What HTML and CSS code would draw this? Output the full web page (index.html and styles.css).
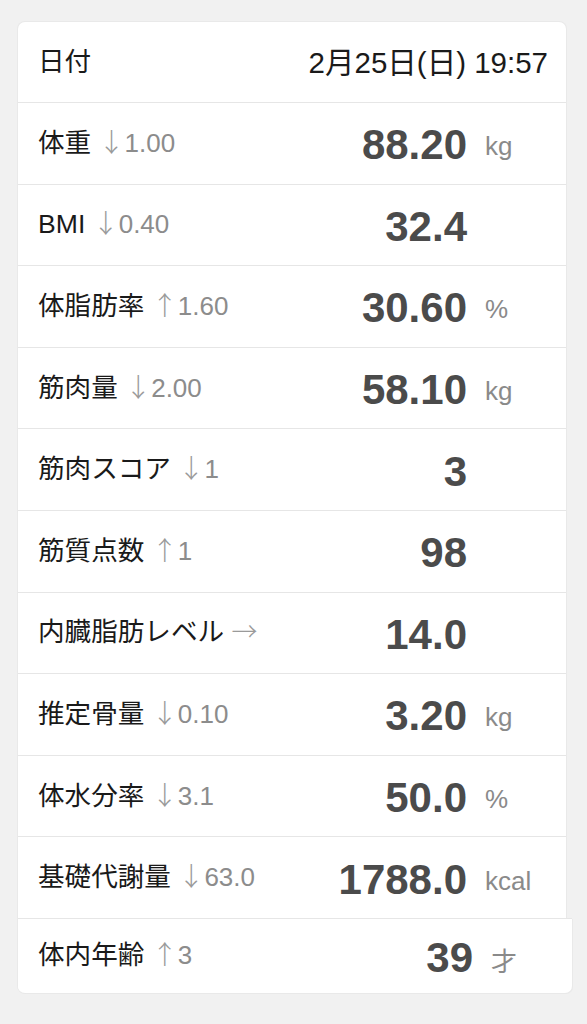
FILE: index.html
```html
<!DOCTYPE html>
<html lang="ja">
<head>
  <meta charset="UTF-8" />
  <meta name="viewport" content="width=device-width, initial-scale=1" />
  <title>体組成</title>
  <link rel="stylesheet" href="styles.css">
</head>
<body>

  <!-- Measurement card -->
  <div class="card">
    <div class="row head">
      <span class="label">日付</span>
      <span class="date">2月25日(日) 19:57</span>
    </div>

    <div class="row">
      <span class="label">体重 <span class="delta"><span class="arrow">↓</span>1.00</span></span>
      <span class="value">88.20</span>
      <span class="unit">kg</span>
    </div>
    <div class="row">
      <span class="label">BMI <span class="delta"><span class="arrow">↓</span>0.40</span></span>
      <span class="value">32.4</span>
      <span class="unit"></span>
    </div>
    <div class="row">
      <span class="label">体脂肪率 <span class="delta"><span class="arrow">↑</span>1.60</span></span>
      <span class="value">30.60</span>
      <span class="unit">%</span>
    </div>
    <div class="row">
      <span class="label">筋肉量 <span class="delta"><span class="arrow">↓</span>2.00</span></span>
      <span class="value">58.10</span>
      <span class="unit">kg</span>
    </div>
    <div class="row">
      <span class="label">筋肉スコア <span class="delta"><span class="arrow">↓</span>1</span></span>
      <span class="value">3</span>
      <span class="unit"></span>
    </div>
    <div class="row">
      <span class="label">筋質点数 <span class="delta"><span class="arrow">↑</span>1</span></span>
      <span class="value">98</span>
      <span class="unit"></span>
    </div>
    <div class="row">
      <span class="label">内臓脂肪レベル <span class="delta"><span class="arrow">→</span></span></span>
      <span class="value">14.0</span>
      <span class="unit"></span>
    </div>
    <div class="row">
      <span class="label">推定骨量 <span class="delta"><span class="arrow">↓</span>0.10</span></span>
      <span class="value">3.20</span>
      <span class="unit">kg</span>
    </div>
    <div class="row">
      <span class="label">体水分率 <span class="delta"><span class="arrow">↓</span>3.1</span></span>
      <span class="value">50.0</span>
      <span class="unit">%</span>
    </div>
    <div class="row">
      <span class="label">基礎代謝量 <span class="delta"><span class="arrow">↓</span>63.0</span></span>
      <span class="value">1788.0</span>
      <span class="unit">kcal</span>
    </div>
    <div class="row last">
      <span class="label">体内年齢 <span class="delta"><span class="arrow">↑</span>3</span></span>
      <span class="value">39</span>
      <span class="unit">才</span>
    </div>
  </div>

</body>
</html>
```

FILE: styles.css
```css
body {
  margin: 0;
  padding: 22px 21px 30px 18px;
  background-color: #f1f1f1;
  font-family: "Liberation Sans", "Noto Sans CJK JP", sans-serif;
  color: #1a1a1a;
}

.card {
  background: white;
  border-radius: 7px;
  box-shadow: 0 0 0 1px #e9e9e9;
}

.row {
  display: flex;
  align-items: center;
  box-sizing: border-box;
  height: 81.6px;
  padding-left: 20px;
  border-top: 1px solid #e6e6e6;
}

.row.head {
  height: 80px;
  border-top: none;
  padding-right: 18px;
}

.row.last {
  height: 75px;
  margin-right: -6px;
  background: white;
  border-radius: 0 0 7px 7px;
  box-shadow: 1px 1px 0 #e9e9e9;
}

.label {
  flex: 1;
  font-size: 26.6px;
  white-space: nowrap;
  padding-bottom: 6px;
}

.date {
  font-size: 29.5px;
  padding-bottom: 5px;
}

.delta {
  font-size: 26px;
  color: #8c8c8c;
}

.arrow {
  font-family: "Noto Sans CJK JP", sans-serif;
  font-weight: 300;
  color: #9a9a9a;
}

.value {
  font-size: 42px;
  font-weight: bold;
  color: #4b4b4b;
  padding-top: 4px;
}

.unit {
  width: 99px;
  box-sizing: border-box;
  padding-left: 18px;
  padding-top: 7px;
  font-size: 26px;
  color: #8a8a8a;
}
```
